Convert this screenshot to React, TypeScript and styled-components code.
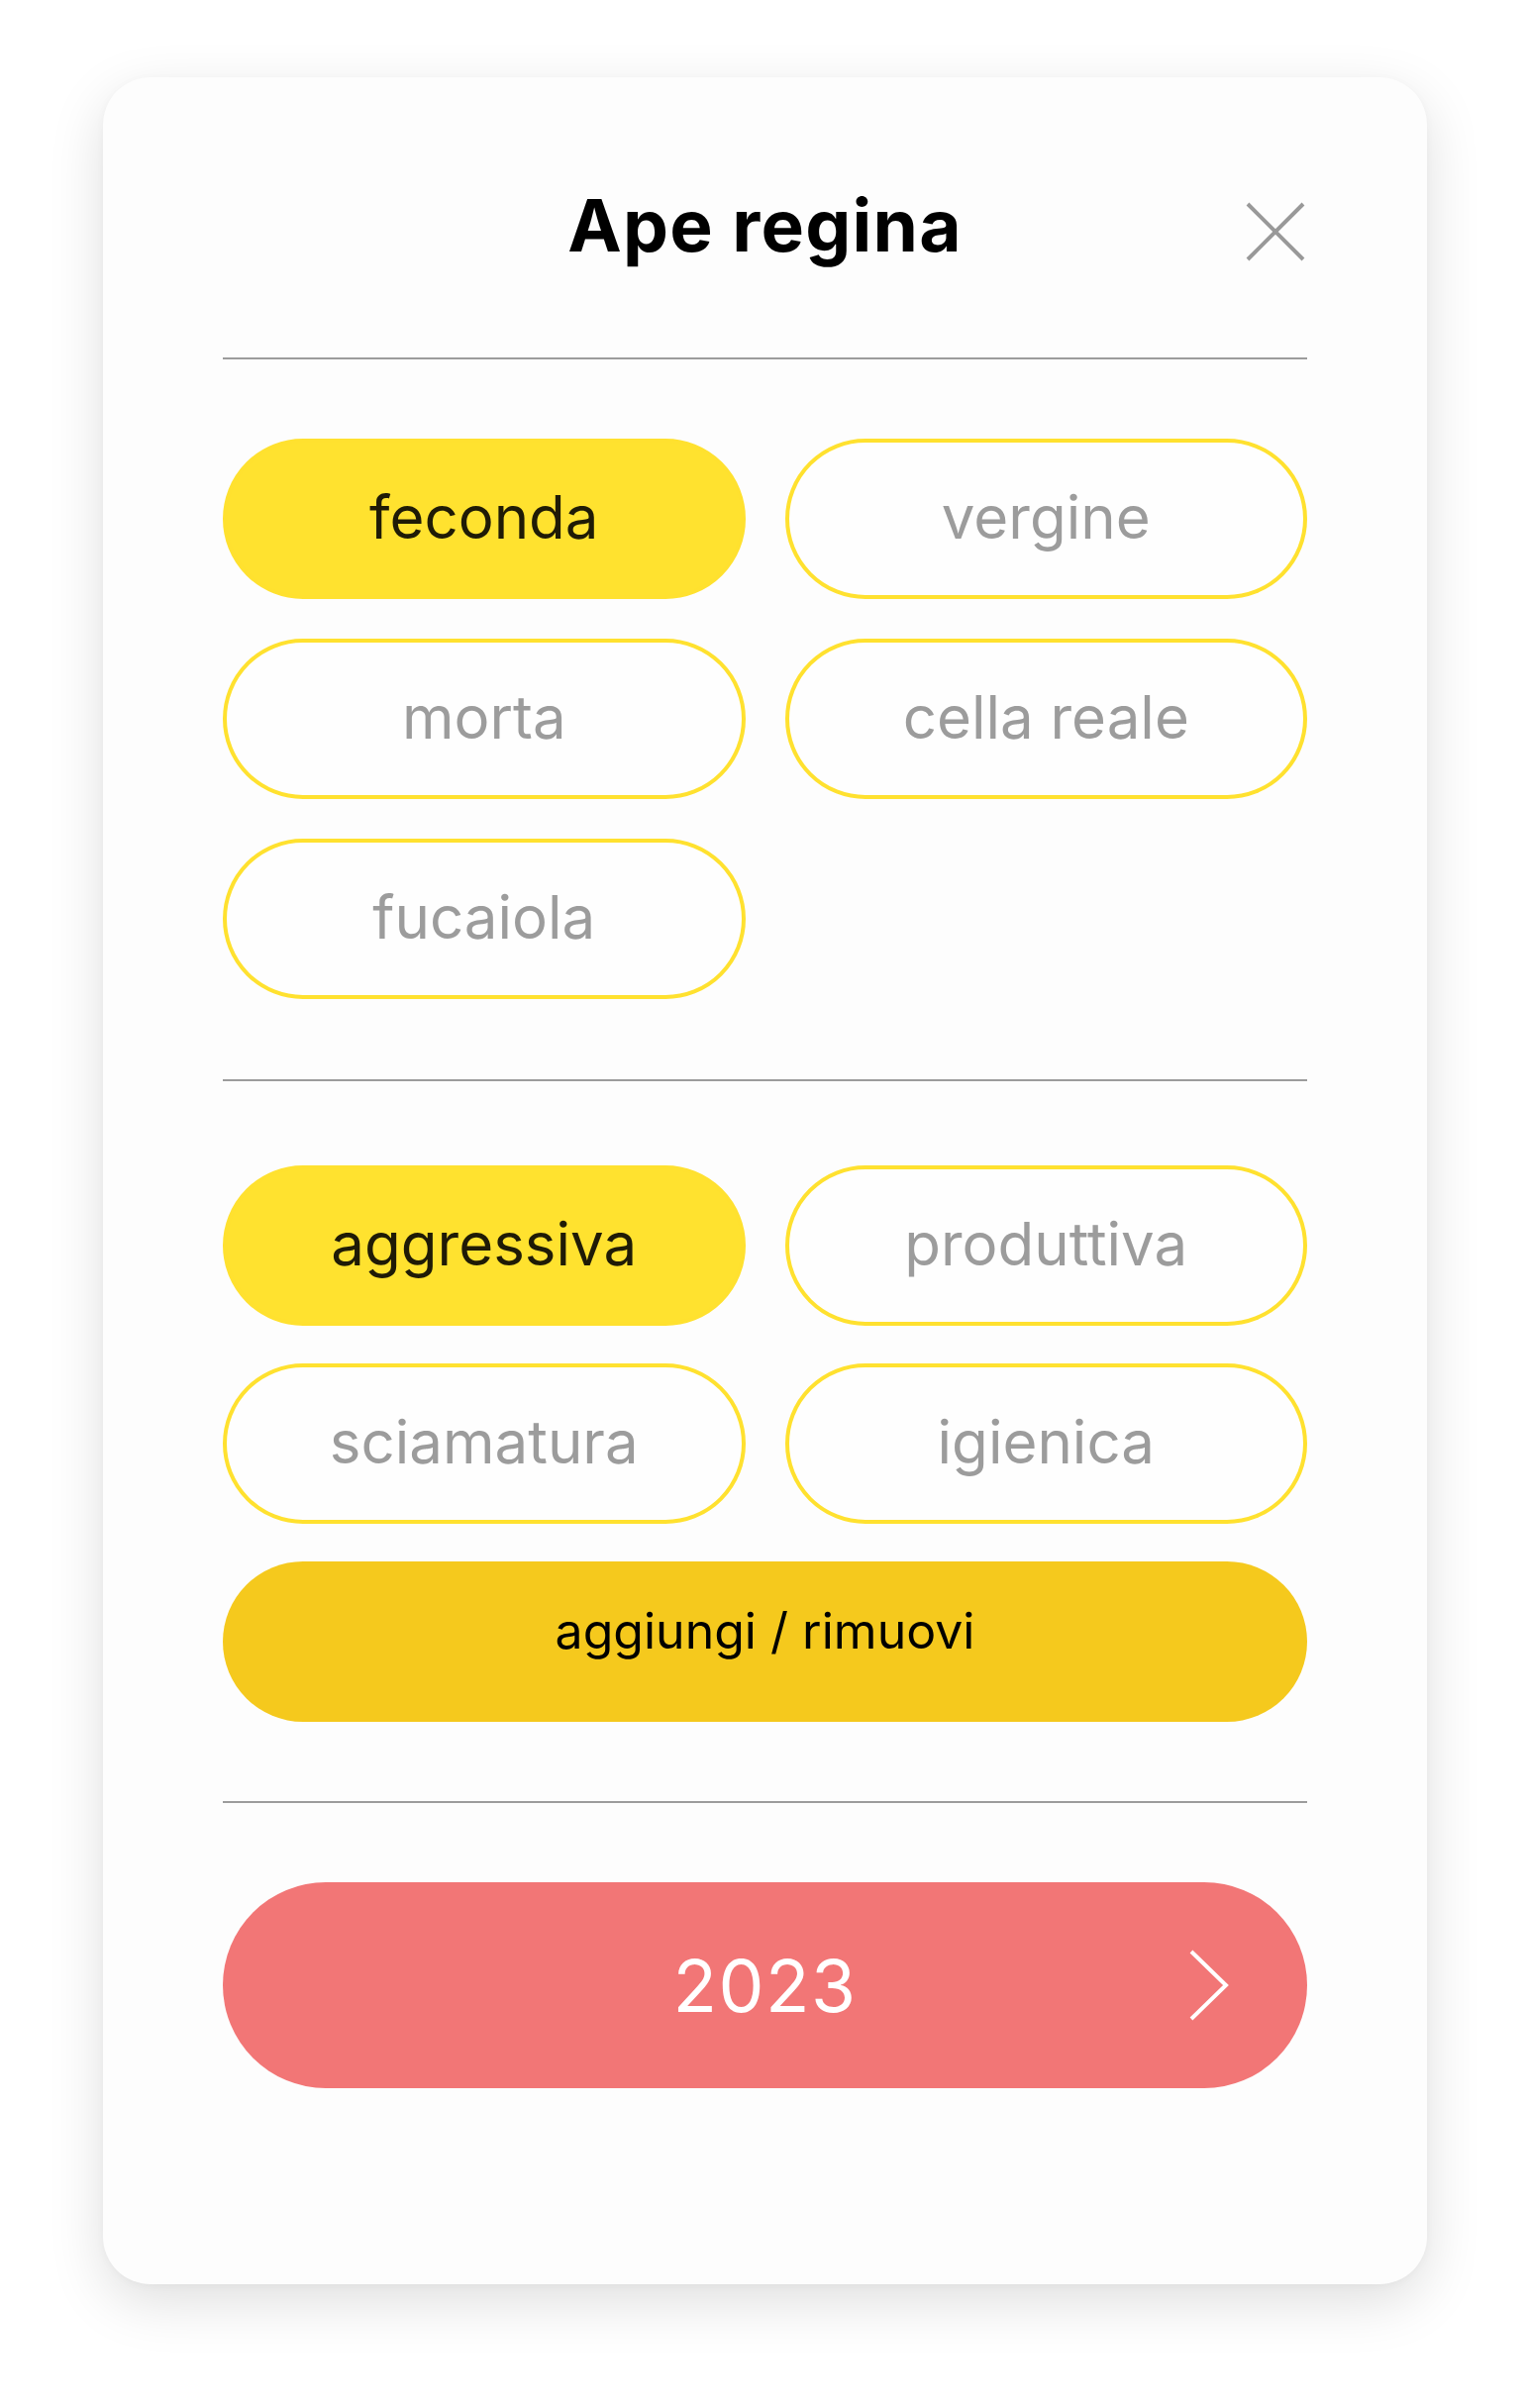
import React from "react";
import styled, { createGlobalStyle } from "styled-components";

const GlobalStyle = createGlobalStyle`
  html, body {
    margin: 0;
    padding: 0;
    background: #ffffff;
  }
  * { box-sizing: border-box; }
  body {
    font-family: Inter, "Noto Sans", "Liberation Sans", sans-serif;
  }
`;

const Page = styled.div`
  width: 1540px;
  height: 2432px;
  padding: 78px 0 0 104px;
  background: #ffffff;
`;

const Card = styled.div`
  width: 1337px;
  height: 2229px;
  background: #fdfdfd;
  border-radius: 48px;
  box-shadow: 0 18px 56px rgba(0, 0, 0, 0.13), 0 2px 10px rgba(0, 0, 0, 0.03);
  padding: 0 121px;
  display: flex;
  flex-direction: column;
`;

const Header = styled.header`
  display: grid;
  grid-template-columns: 64px 1fr 64px;
  align-items: center;
  padding: 106px 0 89px;
`;

const Title = styled.h1`
  grid-column: 2;
  margin: 0;
  font-family: Inter, "Liberation Sans", sans-serif;
  font-weight: 700;
  font-size: 73px;
  line-height: 88px;
  color: #000;
  text-align: center;
  letter-spacing: 1.2px;
`;

const CloseButton = styled.button`
  grid-column: 3;
  width: 64px;
  height: 64px;
  margin-top: 11px;
  padding: 0;
  border: none;
  background: transparent;
  display: flex;
  align-items: center;
  justify-content: center;
  cursor: pointer;
`;

const Divider = styled.hr`
  margin: 0;
  border: none;
  height: 2px;
  background: #9c9c9c;
  flex-shrink: 0;
`;

const Section = styled.section<{ $top: number; $bottom: number; $gap: number }>`
  display: grid;
  grid-template-columns: 1fr 1fr;
  column-gap: 40px;
  row-gap: ${(p) => p.$gap}px;
  padding: ${(p) => p.$top}px 0 ${(p) => p.$bottom}px;
`;

const Pill = styled.button<{ $active?: boolean }>`
  height: 162px;
  border-radius: 81px;
  border: 4px solid #ffe12f;
  background: ${(p) => (p.$active ? "#ffe22f" : "#fefefe")};
  color: ${(p) => (p.$active ? "#1f1b06" : "#9c9c9c")};
  font-family: Inter, "Liberation Sans", sans-serif;
  font-size: 60px;
  font-weight: 400;
  line-height: 1;
  display: flex;
  align-items: center;
  justify-content: center;
  padding: 0 0 4px;
  cursor: pointer;
`;

const WideButton = styled.button`
  grid-column: 1 / -1;
  height: 162px;
  border-radius: 81px;
  border: none;
  background: #f5c91d;
  color: #000;
  font-family: Inter, "Liberation Sans", sans-serif;
  font-size: 50px;
  font-weight: 400;
  line-height: 1;
  display: flex;
  align-items: center;
  justify-content: center;
  padding: 0 0 22px;
  cursor: pointer;
`;

const YearWrap = styled.div`
  padding: 80px 0 0;
`;

const YearButton = styled.button`
  width: 100%;
  height: 208px;
  border-radius: 104px;
  border: none;
  background: #f27676;
  color: #ffffff;
  display: grid;
  grid-template-columns: 1fr auto 1fr;
  align-items: center;
  padding: 0 79px 0 0;
  font-family: Inter, "Liberation Sans", sans-serif;
  font-size: 73px;
  font-weight: 400;
  line-height: 1;
  cursor: pointer;
`;

const YearText = styled.span`
  grid-column: 2;
  padding-left: 79px;
  letter-spacing: 1.5px;
`;

const Chevron = styled.svg`
  grid-column: 3;
  justify-self: end;
`;

const stateOptions = [
  { label: "feconda", active: true },
  { label: "vergine", active: false },
  { label: "morta", active: false },
  { label: "cella reale", active: false },
  { label: "fucaiola", active: false },
];

const traitOptions = [
  { label: "aggressiva", active: true },
  { label: "produttiva", active: false },
  { label: "sciamatura", active: false },
  { label: "igienica", active: false },
];

export default function App() {
  return (
    <>
      <GlobalStyle />
      <Page>
        <Card>
          <Header>
            <Title>Ape regina</Title>
            <CloseButton aria-label="chiudi">
              <svg width="60" height="60" viewBox="0 0 60 60">
                <path
                  d="M2 2 L58 58 M58 2 L2 58"
                  stroke="#999999"
                  strokeWidth="4"
                  fill="none"
                />
              </svg>
            </CloseButton>
          </Header>
          <Divider />
          <Section $top={80} $bottom={81} $gap={40}>
            {stateOptions.map((o) => (
              <Pill key={o.label} $active={o.active}>
                {o.label}
              </Pill>
            ))}
          </Section>
          <Divider />
          <Section $top={85} $bottom={80} $gap={38}>
            {traitOptions.map((o) => (
              <Pill key={o.label} $active={o.active}>
                {o.label}
              </Pill>
            ))}
            <WideButton>aggiungi / rimuovi</WideButton>
          </Section>
          <Divider />
          <YearWrap>
            <YearButton>
              <YearText>2023</YearText>
              <Chevron width="40" height="72" viewBox="0 0 40 72">
                <path
                  d="M2 2 L37 36 L2 70"
                  stroke="#ffffff"
                  strokeWidth="4"
                  fill="none"
                />
              </Chevron>
            </YearButton>
          </YearWrap>
        </Card>
      </Page>
    </>
  );
}
